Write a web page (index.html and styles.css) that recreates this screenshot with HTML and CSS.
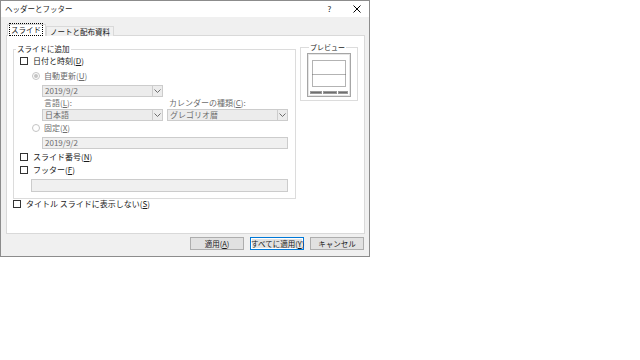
FILE: index.html
```html
<!DOCTYPE html>
<html>
<head>
  <title>ヘッダーとフッター</title>
  <link rel="stylesheet" href="styles.css">
</head>
<body>
  <div class="dialog">
    <div class="titlebar">
      <span class="title">ヘッダーとフッター</span>
      <span class="tb-btn help">?</span>
      <span class="tb-btn close">
        <svg width="8" height="8" viewBox="0 0 8 8"><path d="M0.5 0.5 L7.5 7.5 M7.5 0.5 L0.5 7.5" stroke="#000" stroke-width="1"/></svg>
      </span>
    </div>

    <div class="body">
      <div class="tabs">
        <div class="tab active"><span class="focus">スライド</span></div>
        <div class="tab">ノートと配布資料</div>
      </div>

      <div class="panel">
        <div class="panel-top">
          <fieldset class="group main-group">
            <legend>スライドに追加</legend>

            <label class="row">
              <span class="check"></span>
              <span>日付と時刻(<u>D</u>)</span>
            </label>

            <div class="row indent-radio disabled gap3">
              <span class="radio on"></span>
              <span>自動更新(<u>U</u>)</span>
            </div>

            <div class="combo wide indent-field gap3">
              <span class="combo-text">2019/9/2</span>
              <span class="combo-arrow"><svg width="7" height="4" viewBox="0 0 7 4"><path d="M0.5 0.5 L3.5 3.5 L6.5 0.5" fill="none" stroke="#6d6d6d"/></svg></span>
            </div>

            <div class="two-col indent-field gap1">
              <div class="col">
                <div class="field-label disabled">言語(<u>L</u>):</div>
                <div class="combo">
                  <span class="combo-text">日本語</span>
                  <span class="combo-arrow"><svg width="7" height="4" viewBox="0 0 7 4"><path d="M0.5 0.5 L3.5 3.5 L6.5 0.5" fill="none" stroke="#6d6d6d"/></svg></span>
                </div>
              </div>
              <div class="col">
                <div class="field-label disabled">カレンダーの種類(<u>C</u>):</div>
                <div class="combo">
                  <span class="combo-text">グレゴリオ暦</span>
                  <span class="combo-arrow"><svg width="7" height="4" viewBox="0 0 7 4"><path d="M0.5 0.5 L3.5 3.5 L6.5 0.5" fill="none" stroke="#6d6d6d"/></svg></span>
                </div>
              </div>
            </div>

            <div class="row indent-radio disabled gap1">
              <span class="radio"></span>
              <span>固定(<u>X</u>)</span>
            </div>

            <div class="textbox indent-field gap3">2019/9/2</div>

            <label class="row gap2">
              <span class="check"></span>
              <span>スライド番号(<u>N</u>)</span>
            </label>

            <label class="row gap1">
              <span class="check"></span>
              <span>フッター(<u>F</u>)</span>
            </label>

            <div class="textbox footer-box gap3"></div>
          </fieldset>

          <fieldset class="group preview-group">
            <legend>プレビュー</legend>
            <svg class="preview" width="44" height="44" viewBox="0 0 44 44">
              <rect x="0.5" y="0.5" width="43" height="43" fill="#fff" stroke="#a6a6a6"/>
              <rect x="1.5" y="1.5" width="41" height="41" fill="none" stroke="#e6e6e6"/>
              <rect x="5.5" y="7.5" width="33" height="26" fill="none" stroke="#666" stroke-dasharray="1 1"/>
              <line x1="5.5" y1="21.5" x2="38.5" y2="21.5" stroke="#666" stroke-dasharray="1 1"/>
              <rect x="3.5" y="38.5" width="11" height="2" fill="#6f6f6f" stroke="#9a9a9a"/>
              <rect x="16.5" y="38.5" width="13" height="2" fill="#6f6f6f" stroke="#9a9a9a"/>
              <rect x="31.5" y="38.5" width="9" height="2" fill="#6f6f6f" stroke="#9a9a9a"/>
            </svg>
          </fieldset>
        </div>

        <label class="row title-row">
          <span class="check"></span>
          <span>タイトル スライドに表示しない(<u>S</u>)</span>
        </label>
      </div>

      <div class="buttons">
        <button class="btn">適用(<u>A</u>)</button>
        <button class="btn default">すべてに適用(<u>Y</u>)</button>
        <button class="btn">キャンセル</button>
      </div>
    </div>
  </div>
</body>
</html>
```

FILE: styles.css
```css
/* Dialog window */
body {
  margin: 0;
  background-color: #fff;
  font-family: "Noto Sans CJK JP", "Noto Sans", sans-serif;
  font-size: 8px;
  color: #1a1a1a;
}
u {
  text-decoration: underline;
}
.dialog {
  width: 368px;
  height: 255px;
  border: 1px solid #8c8c8c;
  background-color: #f0f0f0;
  display: flex;
  flex-direction: column;
}
.titlebar {
  height: 16px;
  background-color: #fff;
  display: flex;
  align-items: center;
  padding-left: 4px;
  line-height: 10px;
  font-size: 7.5px;
}
.title {
  flex-grow: 1;
}
.tb-btn {
  width: 25px;
  display: flex;
  justify-content: center;
}
.tb-btn.help {
  font-size: 8px;
  margin-right: 2px;
}

/* Tabs and page */
.body {
  padding: 8px 4px 0 5px;
}
.tabs {
  display: flex;
  align-items: flex-end;
  height: 11px;
  margin-bottom: -1px;
  padding-left: 1px;
  font-size: 7.5px;
}
.tab {
  height: 9px;
  line-height: 9px;
  padding: 0 3px;
  border: 1px solid #d9d9d9;
  border-bottom: none;
  background-color: #f0f0f0;
  white-space: nowrap;
}
.tab.active {
  height: 11px;
  line-height: 10px;
  padding: 0 2px 0 1px;
  background-color: #fff;
  position: relative;
  z-index: 1;
}
.tab .focus {
  border: 1px dotted #000;
  padding: 0 1px;
}
.panel {
  height: 189px;
  background-color: #fff;
  border: 1px solid #d9d9d9;
  padding: 8px 6px 0 6px;
}
.panel-top {
  display: flex;
  gap: 4px;
  align-items: flex-start;
}

/* Group boxes */
.group {
  margin: 0;
  border: 1px solid #dcdcdc;
  min-width: 0;
  flex-shrink: 0;
}
.group legend {
  padding: 0 1px;
  margin-left: 2px;
  line-height: 10px;
  font-size: 7.5px;
}
.main-group {
  width: 281px;
  padding: 1px 0 6px 0;
}
.preview-group {
  width: 50px;
  padding: 1px 0 3px 6px;
  margin-top: -2px;
}
.preview-group legend {
  font-size: 7px;
}
.preview {
  display: block;
}

/* Rows */
.row {
  display: flex;
  align-items: center;
  height: 12px;
  line-height: 12px;
  padding-left: 6px;
}
.gap1 { margin-top: 1px; }
.gap2 { margin-top: 2px; }
.gap3 { margin-top: 3px; }
.indent-radio {
  padding-left: 18px;
}
.indent-field {
  margin-left: 28px;
}
.disabled {
  color: #6d6d6d;
}
.check {
  width: 8px;
  height: 8px;
  box-sizing: border-box;
  border: 1px solid #333;
  background-color: #fff;
  margin-right: 5px;
}
.radio {
  width: 8px;
  height: 8px;
  box-sizing: border-box;
  border: 1px solid #c4c4c4;
  border-radius: 50%;
  margin-right: 4px;
  display: flex;
  align-items: center;
  justify-content: center;
}
.radio.on::after {
  content: "";
  width: 4px;
  height: 4px;
  border-radius: 50%;
  background-color: #c4c4c4;
}

/* Combos and text boxes */
.combo {
  height: 12px;
  box-sizing: border-box;
  border: 1px solid #cccccc;
  background-color: #ececec;
  display: flex;
  align-items: center;
  color: #6d6d6d;
  line-height: 10px;
}
.combo.wide {
  width: 121px;
}
.combo-text {
  flex-grow: 1;
  padding-left: 2px;
}
.combo-arrow {
  width: 10px;
  height: 10px;
  box-sizing: border-box;
  border-left: 1px solid #cccccc;
  display: flex;
  align-items: center;
  justify-content: center;
}
.two-col {
  display: flex;
  gap: 4px;
}
.col {
  width: 121px;
}
.field-label {
  height: 10px;
  line-height: 10px;
  padding-left: 2px;
  margin-bottom: 1px;
}
.textbox {
  width: 246px;
  height: 12px;
  box-sizing: border-box;
  border: 1px solid #cccccc;
  background-color: #f0f0f0;
  color: #6d6d6d;
  line-height: 10px;
  padding-left: 2px;
}
.footer-box {
  width: 257px;
  height: 13px;
  margin-left: 17px;
}
.title-row {
  padding-left: 0;
  margin-top: -1px;
}

/* Buttons */
.buttons {
  display: flex;
  justify-content: flex-end;
  gap: 6px;
  margin-top: 3px;
  padding-right: 1px;
}
.btn {
  width: 54px;
  height: 13px;
  padding: 0;
  border: 1px solid #adadad;
  background-color: #e1e1e1;
  font-family: "Noto Sans CJK JP", "Noto Sans", sans-serif;
  font-size: 7.5px;
  line-height: 10px;
  color: #1a1a1a;
  white-space: nowrap;
}
.btn.default {
  border-color: #0078d7;
  box-shadow: inset 0 0 0 1px #fff;
}
```
